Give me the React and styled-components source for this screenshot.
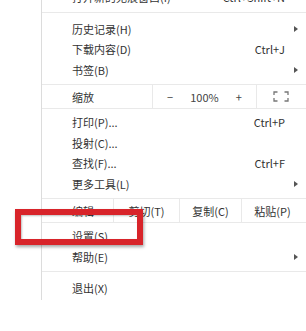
import React from "react";
import styled, { createGlobalStyle } from "styled-components";

const GlobalStyle = createGlobalStyle`
    html, body {
        margin: 0;
        padding: 0;
        background: #ffffff;
        overflow: hidden;
    }
`;

const sections = [
    { pt: 0, pb: 4, items: [{ label: "打开新的无痕窗口(I)", shortcut: "Ctrl+Shift+N" }] },
    {
        pt: 6, pb: 4, items: [
            { label: "历史记录(H)", arrow: true },
            { label: "下载内容(D)", shortcut: "Ctrl+J" },
            { label: "书签(B)", arrow: true },
        ]
    },
    { zoom: true },
    {
        pt: 3, pb: 4, items: [
            { label: "打印(P)...", shortcut: "Ctrl+P" },
            { label: "投射(C)..." },
            { label: "查找(F)...", shortcut: "Ctrl+F" },
            { label: "更多工具(L)", arrow: true },
        ]
    },
    { edit: true },
    {
        pt: 3, pb: 4, items: [
            { label: "设置(S)" },
            { label: "帮助(E)", arrow: true },
        ]
    },
    { pt: 6, pb: 1, last: true, items: [{ label: "退出(X)" }] },
];

function FullscreenIcon() {
    return (
        <svg width="16" height="11" viewBox="0 0 16 11" fill="none" stroke="#777" strokeWidth="1.3">
            <path d="M1 4V1h3.5" />
            <path d="M11.5 1H15v3" />
            <path d="M15 7v3h-3.5" />
            <path d="M4.5 10H1V7" />
        </svg>
    );
}

function MenuItem({ label, shortcut, arrow }) {
    return (
        <Item>
            <Label>{label}</Label>
            {shortcut && <Shortcut>{shortcut}</Shortcut>}
            <ArrowSlot>{arrow && <Arrow />}</ArrowSlot>
        </Item>
    );
}

function ZoomRow() {
    return (
        <Row>
            <RowLabel $width={110}>缩放</RowLabel>
            <ZoomGroup>
                <ZoomCell>−</ZoomCell>
                <ZoomCell>100%</ZoomCell>
                <ZoomCell>+</ZoomCell>
            </ZoomGroup>
            <FullCell>
                <FullscreenIcon />
            </FullCell>
        </Row>
    );
}

function EditRow() {
    return (
        <Row>
            <RowLabel $width={71}>编辑</RowLabel>
            <EditCell $width={66}>剪切(T)</EditCell>
            <EditCell $width={62}>复制(C)</EditCell>
            <EditCell>粘贴(P)</EditCell>
        </Row>
    );
}

export default function App() {
    return (
        <>
            <GlobalStyle />
            <Page>
                <Menu>
                    {sections.map((s, i) => {
                        if (s.zoom) return <ZoomRow key={i} />;
                        if (s.edit) return <EditRow key={i} />;
                        return (
                            <Section key={i} $pt={s.pt} $pb={s.pb} $last={s.last}>
                                {s.items.map((it) => (
                                    <MenuItem key={it.label} {...it} />
                                ))}
                            </Section>
                        );
                    })}
                </Menu>
                <Highlight />
            </Page>
        </>
    );
}

const Page = styled.div`
    position: relative;
    width: 306px;
    height: 331px;
    overflow: hidden;
    background: #ffffff;
    font-family: "Noto Sans CJK SC", "Microsoft YaHei", sans-serif;
    font-size: 11px;
    color: #333333;
`;

const Menu = styled.div`
    margin-left: 41px;
    margin-top: -13px;
    width: 265px;
    border-left: 1px solid #dcdcdc;
    background: #ffffff;
`;

const Section = styled.div`
    padding-top: ${(p) => p.$pt}px;
    padding-bottom: ${(p) => p.$pb}px;
    border-bottom: ${(p) => (p.$last ? "none" : "1px solid #e9e9e9")};
`;

const Item = styled.div`
    display: flex;
    align-items: center;
    height: 20.5px;
    padding-left: 30px;
`;

const Label = styled.span`
    flex: 1;
    white-space: nowrap;
`;

const Shortcut = styled.span`
    white-space: nowrap;
`;

const ArrowSlot = styled.span`
    width: 22px;
    display: flex;
    align-items: center;
    padding-left: 9px;
    box-sizing: border-box;
`;

const Arrow = styled.span`
    width: 0;
    height: 0;
    border-top: 3px solid transparent;
    border-bottom: 3px solid transparent;
    border-left: 4px solid #555555;
`;

const Row = styled.div`
    display: flex;
    height: 23px;
    border-bottom: 1px solid #e9e9e9;
`;

const RowLabel = styled.div`
    width: ${(p) => p.$width}px;
    flex-shrink: 0;
    box-sizing: border-box;
    padding-left: 30px;
    display: flex;
    align-items: center;
`;

const ZoomGroup = styled.div`
    display: flex;
    width: 103px;
    border-left: 1px solid #e9e9e9;
`;

const ZoomCell = styled.div`
    flex: 1;
    display: flex;
    align-items: center;
    justify-content: center;
    color: #444444;
`;

const FullCell = styled.div`
    flex: 1;
    display: flex;
    align-items: center;
    justify-content: center;
    border-left: 1px solid #e9e9e9;
    padding-right: 2px;
`;

const EditCell = styled.div`
    width: ${(p) => (p.$width ? `${p.$width}px` : "auto")};
    flex: ${(p) => (p.$width ? "0 0 auto" : "1")};
    box-sizing: border-box;
    display: flex;
    align-items: center;
    justify-content: center;
    border-left: 1px solid #e9e9e9;
    padding-right: ${(p) => (p.$width ? "0" : "4px")};
`;

const Highlight = styled.div`
    position: absolute;
    left: 15px;
    top: 209px;
    width: 128px;
    height: 36px;
    box-sizing: border-box;
    border: 6px solid #d8242a;
    box-shadow: 1px 2px 3px rgba(0, 0, 0, 0.35), inset 1px 1px 2px rgba(0, 0, 0, 0.25);
    pointer-events: none;
`;
